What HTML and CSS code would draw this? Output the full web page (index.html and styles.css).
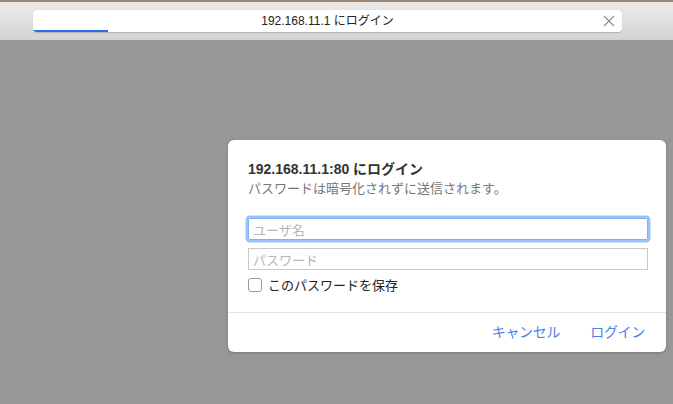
FILE: index.html
```html
<!DOCTYPE html>
<html lang="ja">
<head>
<meta charset="utf-8">
<title>ログイン</title>
<link rel="stylesheet" href="styles.css">
</head>
<body>
<div class="topline"></div>
<header class="toolbar">
  <div class="addressbar">
    <span class="tab-title">192.168.11.1 にログイン</span>
    <svg class="close" width="12" height="12" viewBox="0 0 12 12"><path d="M1 1L11 11M11 1L1 11" stroke="#8a8a8a" stroke-width="1.1" fill="none"/></svg>
    <div class="progress"></div>
  </div>
</header>
<main class="stage">
  <div class="dialog">
    <div class="dialog-body">
      <h1 class="title">192.168.11.1:80 にログイン</h1>
      <p class="subtitle">パスワードは暗号化されずに送信されます。</p>
      <div class="field field-focus"><span class="placeholder">ユーザ名</span></div>
      <div class="field"><span class="placeholder">パスワード</span></div>
      <label class="remember"><span class="checkbox"></span><span>このパスワードを保存</span></label>
    </div>
    <div class="dialog-footer">
      <span class="btn">キャンセル</span>
      <span class="btn">ログイン</span>
    </div>
  </div>
</main>
</body>
</html>
```
FILE: styles.css
```css
html, body {
  margin: 0;
  padding: 0;
}
body {
  width: 673px;
  height: 404px;
  overflow: hidden;
  background: #979797;
  font-family: "Liberation Sans", "Noto Sans CJK JP", sans-serif;
}
.topline {
  height: 2px;
  background: #9b8777;
}
.toolbar {
  height: 38px;
  background: linear-gradient(#ebebeb, #d4d4d4);
  box-sizing: border-box;
  padding: 8px 0 0 33px;
}
.addressbar {
  position: relative;
  width: 589px;
  height: 22px;
  background: #fff;
  border-radius: 4px;
  box-shadow: 0 0.5px 1px rgba(0,0,0,0.18);
  display: flex;
  align-items: center;
  justify-content: center;
  overflow: hidden;
}
.tab-title {
  font-size: 12px;
  color: #222;
  line-height: 22px;
}
.close {
  position: absolute;
  right: 7px;
  top: 5px;
}
.progress {
  position: absolute;
  left: 0;
  bottom: 0;
  width: 75px;
  height: 2px;
  background: #2a6cf0;
}
.stage {
  padding: 100px 0 0 228px;
}
.dialog {
  width: 438px;
  height: 212px;
  background: #fff;
  border-radius: 6px;
  box-shadow: 0 1px 3px rgba(0,0,0,0.2);
  display: flex;
  flex-direction: column;
}
.dialog-body {
  padding: 19px 18px 0 20px;
  height: 173px;
  box-sizing: border-box;
  border-bottom: 1px solid #e4e4e4;
}
.title {
  margin: 0;
  font-size: 14px;
  font-weight: bold;
  color: #333;
  line-height: 20px;
}
.subtitle {
  margin: 0 0 19px;
  font-size: 13px;
  color: #777;
  line-height: 20px;
}
.field {
  width: 400px;
  height: 22px;
  box-sizing: border-box;
  border: 1px solid #c9c9c9;
  display: flex;
  align-items: center;
  padding-left: 4px;
  margin-bottom: 8px;
}
.field-focus {
  border: 1px solid #7fb0f4;
  border-radius: 2px;
  box-shadow: 0 0 0 2.5px #99c2f8;
}
.placeholder {
  font-size: 13px;
  color: #b5b5b5;
}
.remember {
  display: flex;
  align-items: center;
  gap: 6px;
  font-size: 13px;
  color: #222;
  margin-top: -3px;
}
.checkbox {
  width: 12px;
  height: 12px;
  border: 1px solid #9c9c9c;
  border-radius: 3px;
  background: #fff;
}
.dialog-footer {
  flex: 1;
  display: flex;
  justify-content: flex-end;
  align-items: center;
  gap: 30px;
  padding: 0 21px 3px 0;
}
.btn {
  font-size: 14px;
  color: #4f7fe6;
  letter-spacing: -0.3px;
}
```
